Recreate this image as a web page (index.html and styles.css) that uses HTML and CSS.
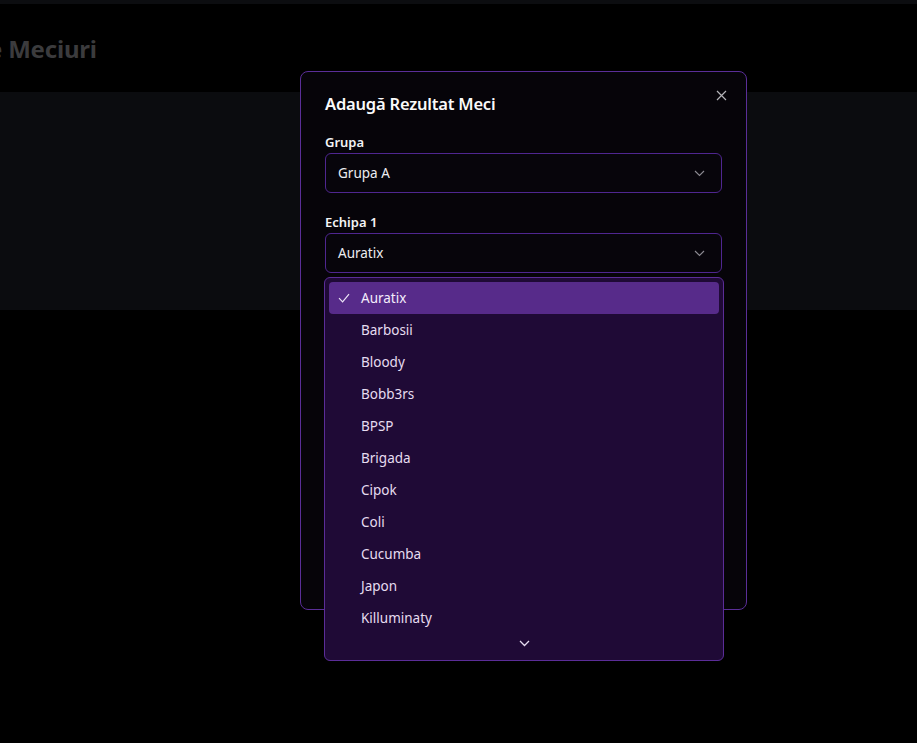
FILE: index.html
```html
<!DOCTYPE html>
<html lang="ro">
<head>
<meta charset="utf-8">
<title>Rezultate Meciuri</title>
<link rel="stylesheet" href="styles.css">
</head>
<body>
<div class="topstrip"></div>
<header class="header">
  <h1 class="page-title">Rezultate Meciuri</h1>
</header>
<section class="panel"></section>

<div class="modal" role="dialog">
  <button class="close" aria-label="Închide">
    <svg width="11" height="11" viewBox="0 0 11 11"><path d="M1 1L10 10M10 1L1 10" stroke="currentColor" stroke-width="1.2" fill="none"/></svg>
  </button>
  <h2 class="modal-title">Adaugă Rezultat Meci</h2>
  <div class="field">
    <label class="label">Grupa</label>
    <div class="select"><span>Grupa A</span>
      <svg class="chev" width="11" height="7" viewBox="0 0 11 7"><path d="M1 1l4.5 4.5L10 1" stroke="currentColor" stroke-width="1.1" fill="none"/></svg>
    </div>
  </div>
  <div class="field">
    <label class="label">Echipa 1</label>
    <div class="select"><span>Auratix</span>
      <svg class="chev" width="11" height="7" viewBox="0 0 11 7"><path d="M1 1l4.5 4.5L10 1" stroke="currentColor" stroke-width="1.1" fill="none"/></svg>
    </div>
  </div>
</div>

<div class="dropdown" role="listbox">
  <div class="option selected">
    <svg class="check" width="12" height="10" viewBox="0 0 12 10"><path d="M1 5.2l3.6 3.6L11 1.2" stroke="currentColor" stroke-width="1.2" fill="none"/></svg>
    <span>Auratix</span>
  </div>
  <div class="option"><span>Barbosii</span></div>
  <div class="option"><span>Bloody</span></div>
  <div class="option"><span>Bobb3rs</span></div>
  <div class="option"><span>BPSP</span></div>
  <div class="option"><span>Brigada</span></div>
  <div class="option"><span>Cipok</span></div>
  <div class="option"><span>Coli</span></div>
  <div class="option"><span>Cucumba</span></div>
  <div class="option"><span>Japon</span></div>
  <div class="option"><span>Killuminaty</span></div>
  <div class="scroll-down">
    <svg width="11" height="7" viewBox="0 0 11 7"><path d="M1 1l4.5 4.5L10 1" stroke="currentColor" stroke-width="1.3" fill="none"/></svg>
  </div>
</div>
</body>
</html>
```

FILE: styles.css
```css
* { box-sizing: border-box; }
html, body {
  margin: 0;
  background: #000;
  font-family: "Noto Sans", "Open Sans", sans-serif;
  color: #fff;
  overflow: hidden;
  height: 743px;
}
.topstrip {
  height: 4px;
  background: #0c0d10;
}
.header {
  height: 88px;
  display: flex;
  align-items: center;
  overflow: hidden;
}
.page-title {
  margin: 0 0 0 -110px;
  font-size: 24px;
  font-weight: 700;
  color: #3b3b3d;
  white-space: nowrap;
  letter-spacing: -0.2px;
}
.panel {
  height: 218px;
  background: #0b0c0f;
}

.modal {
  position: absolute;
  left: 300px;
  top: 71px;
  width: 447px;
  height: 539px;
  background: #060409;
  border: 1px solid #5a2e98;
  border-radius: 8px;
  padding: 18px 24px;
}
.close {
  position: absolute;
  top: 17px;
  right: 18px;
  width: 13px;
  height: 13px;
  padding: 1px;
  border: 0;
  background: none;
  color: #b4b4b8;
  display: flex;
}
.modal-title {
  margin: 0;
  font-size: 16.5px;
  line-height: 28px;
  font-weight: 600;
  color: #fafafa;
  letter-spacing: -0.2px;
}
.field {
  margin-top: 14px;
}
.field + .field {
  margin-top: 19px;
}
.label {
  display: block;
  font-size: 13px;
  line-height: 20px;
  font-weight: 600;
  color: #f4f4f5;
  margin-bottom: 1px;
}
.select {
  height: 40px;
  border: 1px solid #4f2690;
  border-radius: 6px;
  background: #07050b;
  display: flex;
  align-items: center;
  justify-content: space-between;
  padding: 0 16px 0 12px;
  font-size: 13.5px;
  color: #ececf0;
}
.chev {
  color: #8c8a92;
}

.dropdown {
  position: absolute;
  left: 324px;
  top: 277px;
  width: 400px;
  height: 384px;
  background: #1f0a36;
  border: 1px solid #5b2d98;
  border-radius: 6px;
  padding: 4px;
  display: flex;
  flex-direction: column;
}
.option {
  height: 32px;
  flex: none;
  display: flex;
  align-items: center;
  padding-left: 32px;
  position: relative;
  border-radius: 4px;
  font-size: 13.5px;
  color: #e6dcf0;
}
.option.selected {
  background: #572b8a;
  color: #f3ecfb;
}
.check {
  position: absolute;
  left: 9px;
  top: 11px;
  color: #ece4f7;
}
.scroll-down {
  flex: 1;
  display: flex;
  align-items: center;
  justify-content: center;
  color: #e6dcf0;
  padding-bottom: 3px;
}
```
